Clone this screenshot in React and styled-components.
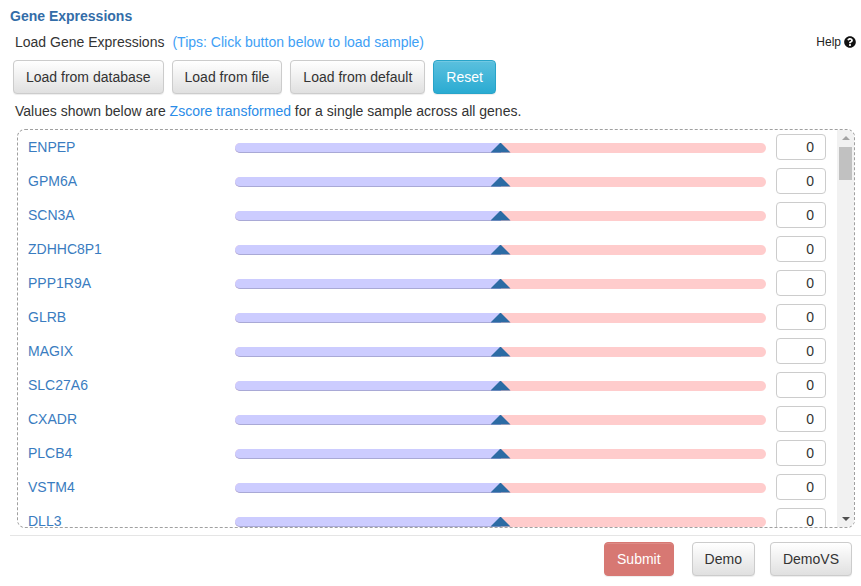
import React from 'react';
import styled, { createGlobalStyle } from 'styled-components';
import { FaQuestionCircle } from 'react-icons/fa';

const GENES = [
  'ENPEP', 'GPM6A', 'SCN3A', 'ZDHHC8P1', 'PPP1R9A', 'GLRB', 'MAGIX',
  'SLC27A6', 'CXADR', 'PLCB4', 'VSTM4', 'DLL3', 'SNAP25',
];

const GlobalStyle = createGlobalStyle`
  body {
    margin: 0;
    background: #fff;
    font-family: "Liberation Sans", Arial, sans-serif;
    font-size: 14px;
    color: #333;
  }
`;

const Page = styled.div`
  width: 861px;
  height: 586px;
  overflow: hidden;
`;

const Title = styled.div`
  margin: 6px 10px 0;
  line-height: 20px;
  font-size: 14px;
  font-weight: bold;
  color: #336da8;
`;

const LoadLine = styled.div`
  display: flex;
  align-items: center;
  margin-top: 6px;
  padding: 0 5px 0 15px;
  line-height: 20px;
`;

const Tips = styled.span`
  margin-left: 8px;
  color: #3ea0f5;
`;

const Help = styled.span`
  margin-left: auto;
  display: flex;
  align-items: center;
  gap: 3px;
  font-size: 12px;
  color: #222;
  svg {
    font-size: 12px;
    color: #111;
  }
`;

const ButtonRow = styled.div`
  display: flex;
  gap: 8px;
  margin-top: 8px;
  padding-left: 13px;
`;

const Button = styled.button`
  font-family: inherit;
  font-size: 14px;
  line-height: 20px;
  padding: 6px 12px;
  border-radius: 4px;
  border: 1px solid ${(p) => (p.$kind === 'info' ? '#28a4c9' : p.$kind === 'danger' ? '#d77873' : '#ccc')};
  color: ${(p) => (p.$kind ? '#fff' : '#333')};
  background-image: ${(p) =>
    p.$kind === 'info'
      ? 'linear-gradient(to bottom, #5bc0de 0, #2aabd2 100%)'
      : p.$kind === 'danger'
      ? 'none'
      : 'linear-gradient(to bottom, #fff 0, #e0e0e0 100%)'};
  background-color: ${(p) => (p.$kind === 'danger' ? '#d77873' : '#e8e8e8')};
  box-shadow: inset 0 1px 0 rgba(255, 255, 255, 0.15), 0 1px 1px rgba(0, 0, 0, 0.075);
  margin-left: ${(p) => p.$ml || 0}px;
  cursor: pointer;
`;

const Note = styled.div`
  margin-top: 7px;
  padding-left: 15px;
  line-height: 20px;
`;

const Link = styled.span`
  color: #2a8ce8;
`;

const ScrollBox = styled.div`
  display: flex;
  margin: 8px 0 0 17px;
  width: 838px;
  height: 399px;
  box-sizing: border-box;
  border: 1px dashed #a0a0a0;
  border-radius: 8px;
  overflow: hidden;
`;

const GeneList = styled.div`
  flex: 1;
  overflow: hidden;
`;

const Rail = styled.div`
  display: flex;
  flex-direction: column;
  width: 17px;
  background: #f1f1f1;
`;

const RailArrow = styled.div`
  display: flex;
  align-items: center;
  justify-content: center;
  height: 17px;
  &::before {
    content: '';
    border-left: 4px solid transparent;
    border-right: 4px solid transparent;
    ${(p) =>
      p.$down
        ? 'border-top: 4px solid #505050; margin-top: 1px;'
        : 'border-bottom: 4px solid #a3a3a3; margin-top: -1px;'}
  }
`;

const RailSpace = styled.div`
  flex: 1;
  padding: 0 2px;
`;

const RailThumb = styled.div`
  height: 33px;
  background: #c1c1c1;
`;

const GeneRow = styled.div`
  display: grid;
  grid-template-columns: 197px 1fr 50px;
  column-gap: 10px;
  align-items: center;
  height: 34px;
  padding: 0 11px 0 10px;
`;

const GeneName = styled.span`
  color: #3a7cc0;
`;

const Track = styled.div`
  position: relative;
  height: 10px;
  margin-top: 1px;
  border-radius: 5px;
  background: #ffcccc;
`;

const TrackFill = styled.div`
  height: 10px;
  box-sizing: border-box;
  border-radius: 5px 0 0 5px;
  background: #ccccff;
  border-bottom: 1px solid #a9a9d6;
`;

const Thumb = styled.span`
  position: absolute;
  bottom: 0;
  width: 20px;
  height: 10px;
  margin-left: -10px;
  background: #2c6ba4;
  clip-path: polygon(50% 0, 100% 100%, 0 100%);
`;

const ValueInput = styled.input`
  width: 50px;
  height: 26px;
  box-sizing: border-box;
  border: 1px solid #ccc;
  border-radius: 4px;
  padding: 0 11px 0 4px;
  text-align: right;
  font-family: inherit;
  font-size: 14px;
  color: #333;
  outline: none;
`;

const Divider = styled.hr`
  margin: 7px 0 0 10px;
  border: none;
  border-top: 1px solid #e5e5e5;
`;

const Footer = styled.div`
  display: flex;
  justify-content: flex-end;
  margin-top: 6px;
  padding-right: 9px;
`;

const GeneSlider = ({ name, value }) => {
  const pct = ((value + 3) / 6) * 100;
  return (
    <GeneRow>
      <GeneName>{name}</GeneName>
      <Track>
        <TrackFill style={{ width: `${pct}%` }} />
        <Thumb style={{ left: `${pct}%` }} />
      </Track>
      <ValueInput type="text" defaultValue={value} />
    </GeneRow>
  );
};

export default function App() {
  return (
    <Page>
      <GlobalStyle />
      <Title>Gene Expressions</Title>
      <LoadLine>
        Load Gene Expressions
        <Tips>(Tips: Click button below to load sample)</Tips>
        <Help>
          Help <FaQuestionCircle />
        </Help>
      </LoadLine>
      <ButtonRow>
        <Button>Load from database</Button>
        <Button>Load from file</Button>
        <Button>Load from default</Button>
        <Button $kind="info">Reset</Button>
      </ButtonRow>
      <Note>
        Values shown below are <Link>Zscore transformed</Link> for a single sample across all genes.
      </Note>
      <ScrollBox>
        <GeneList>
          {GENES.map((g) => (
            <GeneSlider key={g} name={g} value={0} />
          ))}
        </GeneList>
        <Rail>
          <RailArrow />
          <RailSpace>
            <RailThumb />
          </RailSpace>
          <RailArrow $down />
        </Rail>
      </ScrollBox>
      <Divider />
      <Footer>
        <Button $kind="danger">Submit</Button>
        <Button $ml={18}>Demo</Button>
        <Button $ml={15}>DemoVS</Button>
      </Footer>
    </Page>
  );
}
